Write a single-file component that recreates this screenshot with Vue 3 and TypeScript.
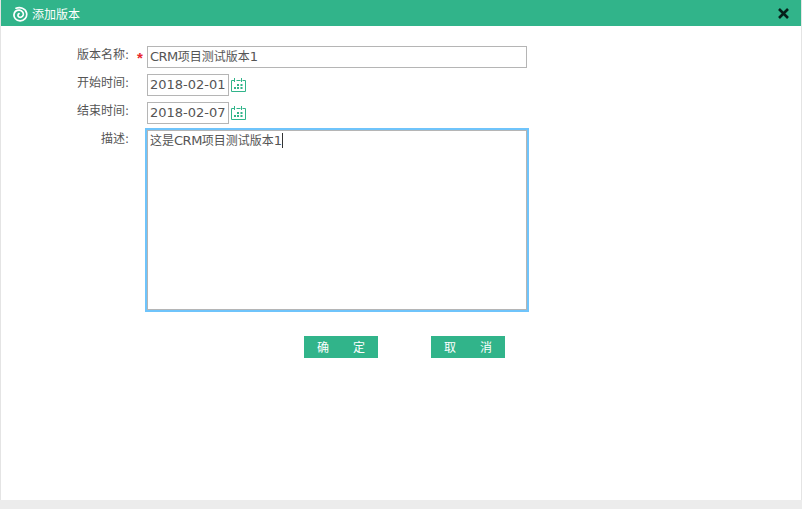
<script setup lang="ts">
const title = '添加版本'
</script>

<template>
  <div class="page">
    <div class="dialog">
      <header class="bar">
        <div class="brand">
          <svg class="logo" width="16" height="16" viewBox="0 0 16 16" fill="none" stroke="#fff" stroke-width="1.7" stroke-linecap="round">
            <path d="M4 2.2C8 .8 13.5 2 14.6 7C15.4 11.5 12 15 8 14.8C4 14.6 1.6 11.5 2 8.5C2.5 5.5 5 4 7.5 4.2C10.2 4.5 11.8 6.8 11.2 9C10.6 11 8.5 11.8 7 11C5.6 10.2 5.6 8.2 7 7.6" />
          </svg>
          <span class="title">{{ title }}</span>
        </div>
        <svg class="close" width="11" height="11" viewBox="0 0 11 11" stroke="#06201a" stroke-width="2.6">
          <path d="M1 1l9 9M10 1l-9 9" />
        </svg>
      </header>

      <main class="content">
        <form class="form" @submit.prevent>
          <label class="label">版本名称:</label>
          <span class="req">*</span>
          <div class="field wide"><span class="lat tight">CRM</span>项目测试版本<span class="lat">1</span></div>

          <label class="label">开始时间:</label>
          <span></span>
          <div class="date">
            <div class="field short"><span class="lat">2018-02-01</span></div>
            <svg class="cal" width="15" height="15" viewBox="0 0 15 15" fill="none" stroke="#31b48a">
              <path d="M3.5 2.5H.5V13.5H14.5V2.5H11.5M5.5 2.5H9.5M3.5 0V4M10.5 0V4" />
              <path d="M6 7h2M9.5 7h2M3 10h2M6 10h2M9.5 10h2" stroke-width="2" />
            </svg>
          </div>

          <label class="label">结束时间:</label>
          <span></span>
          <div class="date">
            <div class="field short"><span class="lat">2018-02-07</span></div>
            <svg class="cal" width="15" height="15" viewBox="0 0 15 15" fill="none" stroke="#31b48a">
              <path d="M3.5 2.5H.5V13.5H14.5V2.5H11.5M5.5 2.5H9.5M3.5 0V4M10.5 0V4" />
              <path d="M6 7h2M9.5 7h2M3 10h2M6 10h2M9.5 10h2" stroke-width="2" />
            </svg>
          </div>

          <label class="label">描述:</label>
          <span></span>
          <div class="area">这是<span class="lat tight">CRM</span>项目测试版本<span class="lat">1</span><i class="caret"></i></div>
        </form>

        <div class="actions">
          <button class="btn" type="button">确&emsp;&emsp;定</button>
          <button class="btn" type="button">取&emsp;&emsp;消</button>
        </div>
      </main>
    </div>
    <div class="foot"></div>
  </div>
</template>

<style>
html, body { margin: 0; background: #fff; }
</style>

<style scoped>
.page {
  width: 802px;
  height: 509px;
  display: flex;
  flex-direction: column;
  font-family: "DejaVu Sans", "Noto Sans CJK SC", sans-serif;
  font-size: 12px;
  color: #555;
}
.lat { font-size: 13px; }
.tight { letter-spacing: -0.5px; }
.dialog {
  flex: 1;
  display: flex;
  flex-direction: column;
  border-left: 1px solid #e4e4e4;
  border-right: 1px solid #e4e4e4;
  background: #fff;
}
.bar {
  height: 26px;
  flex: none;
  background: #31b48a;
  display: flex;
  align-items: center;
  justify-content: space-between;
  padding: 0 12px 0 11px;
}
.brand { display: flex; align-items: center; gap: 4px; }
.logo { display: block; margin-top: 1px; }
.title { color: #fff; font-size: 12px; font-family: "Noto Sans CJK SC", sans-serif; }
.close { display: block; }
.content { flex: 1; }
.form {
  display: grid;
  grid-template-columns: 129px 17px 1fr;
  grid-auto-rows: 22px;
  row-gap: 6px;
  margin: 20px 0 0 0;
  align-items: start;
}
.label {
  text-align: right;
  line-height: 18px;
  padding-right: 1px;
}
.req {
  color: #e8272c;
  font-size: 15px;
  font-weight: 700;
  line-height: 24px;
  padding-left: 7px;
  font-family: "Liberation Sans", sans-serif;
}
.field {
  box-sizing: border-box;
  height: 22px;
  border: 1px solid #b5b5b5;
  padding: 0 2px;
  line-height: 20px;
  white-space: nowrap;
  background: #fff;
}
.wide { width: 380px; }
.short { width: 82px; }
.date { display: flex; align-items: center; gap: 2px; }
.cal { display: block; margin-top: 1px; }
.area {
  box-sizing: border-box;
  width: 380px;
  height: 180px;
  border: 1px solid #b5b5b5;
  box-shadow: 0 0 0 2px #6fc4fb;
  padding: 1px 2px;
  line-height: 18px;
  white-space: nowrap;
}
.caret {
  display: inline-block;
  width: 1px;
  height: 15px;
  background: #333;
  vertical-align: -3px;
}
.actions {
  display: flex;
  gap: 53px;
  margin: 184px 0 0 303px;
}
.btn {
  width: 74px;
  height: 22px;
  border: 0;
  padding: 0;
  background: #31b48a;
  color: #fff;
  font-family: "Noto Sans CJK SC", sans-serif;
  font-size: 12px;
  line-height: 22px;
  text-align: center;
}
.foot {
  height: 9px;
  flex: none;
  background: #ececec;
}
</style>
